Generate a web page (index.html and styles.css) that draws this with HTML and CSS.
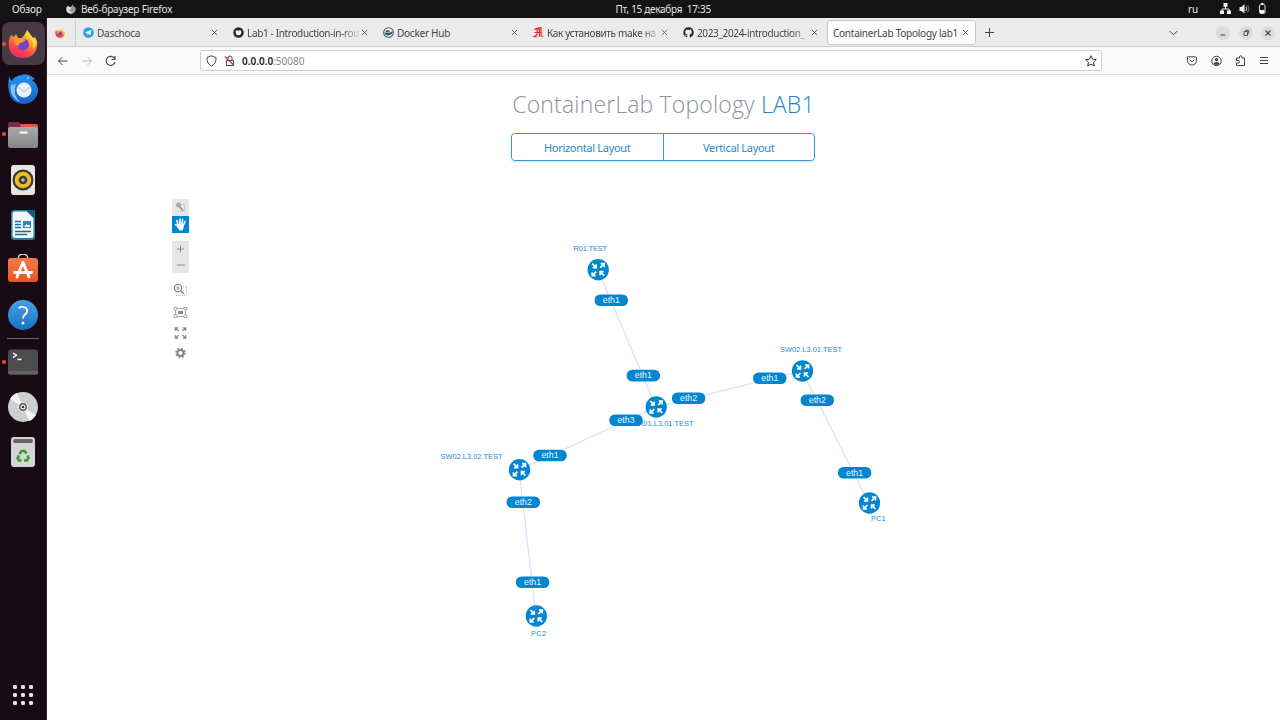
FILE: index.html
```html
<!DOCTYPE html>
<html lang="ru">
<head>
<meta charset="utf-8">
<title>ContainerLab Topology lab1</title>
<link rel="stylesheet" href="styles.css">
</head>
<body>
<svg class="defs" width="0" height="0">
  <defs>
    <linearGradient id="fox" x1=".8" y1="0" x2=".3" y2="1"><stop offset="0" stop-color="#ffe847"/><stop offset=".4" stop-color="#ff9a2e"/><stop offset=".7" stop-color="#ff4a45"/><stop offset="1" stop-color="#e8246f"/></linearGradient>
    <linearGradient id="bird" x1="0" y1="0" x2="0" y2="1"><stop offset="0" stop-color="#2a91ee"/><stop offset="1" stop-color="#1462c4"/></linearGradient>
    <linearGradient id="help" x1="0" y1="0" x2="0" y2="1"><stop offset="0" stop-color="#4ba0e4"/><stop offset="1" stop-color="#1573c6"/></linearGradient>
    <linearGradient id="bag" x1="0" y1="0" x2="0" y2="1"><stop offset="0" stop-color="#f07b4a"/><stop offset="1" stop-color="#e95420"/></linearGradient>
    <linearGradient id="grey" x1="0" y1="0" x2="0" y2="1"><stop offset="0" stop-color="#a9a9a9"/><stop offset="1" stop-color="#858585"/></linearGradient>
    <symbol id="firefox" viewBox="0 0 30 30">
      <path fill="url(#fox)" d="M3 6 6 8 8 5 10 9 14 9 17 5 19 1 22 6 25 9 27 8Q30 13 29 17 27 29 15 29 3 29 1 18 0 11 3 6Z"/>
      <circle cx="15" cy="15.500" r="6" fill="#7543c8"/>
      <path fill="#ff9a2e" d="M6 9 14 9 18 11 15 13 12 14 10 17 7 15Z"/>
      <path fill="#ffd83e" d="M19 1Q18 6 22 9 26 13 25 20 29 16 28 11L25 9 22 5Z"/>
    </symbol>
    <symbol id="close" viewBox="0 0 8 8"><path d="M1 1 7 7M7 1 1 7" stroke="#555" stroke-width="1" fill="none"/></symbol>
    <symbol id="router" viewBox="-11 -11 22 22">
      <circle r="10.700" fill="#0386d2"/>
      <g fill="none" stroke="#fff" stroke-width="1.700">
        <path d="M-6-6-2.200-2.200M-2-5.500V-2H-5.500M2-2 5.800-5.800M2.500-6H6V-2.500M-2 2-5.800 5.800M-2.500 6H-6V2.500M6 6 2.200 2.200M2 5.500V2H5.500"/>
      </g>
    </symbol>
  </defs>
</svg>

<header class="topbar">
  <span class="overview">Обзор</span>
  <svg class="topfox" viewBox="0 0 30 30"><path fill="#999" d="M3 6 6 8 8 5 10 9 14 9 17 5 19 1 22 6 25 9 27 8Q30 13 29 17 27 29 15 29 3 29 1 18 0 11 3 6Z"/><path fill="#ddd" d="M8 5 10 9 18 11 10 17 12 23 20 24 15 29Q3 28 1 18 0 10 8 5Z"/></svg>
  <span class="appname">Веб-браузер Firefox</span>
  <span class="clock">Пт, 15 декабря&nbsp; 17:35</span>
  <span class="lang">ru</span>
  <svg class="status" width="50" height="12" viewBox="0 0 50 12">
    <path d="M3.500 0H7.500V4H3.500ZM0 7.500H4V11H0ZM7 7.500H11V11H7Z" fill="#eee"/><path d="M5.500 3.500V6H2V8M5.500 6H9V8" stroke="#eee" stroke-width="1" fill="none"/>
    <path d="M19.500 4H21.500L24.500 1V10.500L21.500 8H19.500Z" fill="#eee"/><path d="M26 3.500Q27.300 5.700 26 8" stroke="#ddd" fill="none"/><path d="M27.700 2Q30 5.700 27.700 9.500" stroke="#777" fill="none"/>
    <rect x="39.500" y="1.500" width="5.500" height="9" rx="1.200" fill="none" stroke="#ddd"/><path d="M41 0H43.500V1.500H41ZM40 7H44.500V10H40Z" fill="#eee"/>
  </svg>
</header>

<div class="desktop">
  <nav class="dock">
    <div class="app active running"><svg viewBox="0 0 30 30"><use href="#firefox"/></svg></div>
    <div class="app"><svg viewBox="0 0 30 30"><path fill="url(#bird)" d="M2 1Q1 5 4 7 6 2 14 1 18-1 23 2L27 5 24 6Q31 11 30 18 27 30 15 30 3 29 1 18-1 9 2 1Z"/><path fill="#80c6f8" d="M3 11Q1 23 12 28 4 20 8 10Z"/><circle cx="16" cy="16" r="7.500" fill="#e9f2fc"/><path d="M10 13 16 18 22 13" fill="none" stroke="#9abce2"/><circle cx="20" cy="4" r=".8" fill="#fff"/></svg></div>
    <div class="app running"><svg viewBox="0 0 30 30"><path d="M0 5Q0 3 2 3H10L13 5H27Q30 5 30 8V14H0Z" fill="#7c2a51"/><path d="M12 5H28Q30 5 30 8V12H14Z" fill="#e25b35"/><rect y="8" width="30" height="21" rx="2.500" fill="url(#grey)"/><rect x="11.500" y="12.500" width="8" height="2" rx=".5" fill="#fff"/></svg></div>
    <div class="app"><svg viewBox="0 0 30 30"><rect x="3" y="0" width="24" height="30" rx="3" fill="#e9e4df"/><circle cx="15" cy="15" r="10.500" fill="#3b3b3b"/><circle cx="15" cy="15" r="6.300" fill="none" stroke="#f2bd20" stroke-width="4"/><circle cx="15" cy="15" r="1.800" fill="#bbb"/></svg></div>
    <div class="app"><svg viewBox="0 0 30 30"><path d="M6 0H20L27 7V27Q27 30 24 30H6Q3 30 3 27V3Q3 0 6 0Z" fill="#1b7cab"/><path d="M7 1.500H19L25.500 8V26Q25.500 28 23.500 28H7Q4.500 28 4.500 26V4Q4.500 1.500 7 1.500Z" fill="#f1f8fc"/><path d="M18 0H27V9Z" fill="#0d5e88"/><path d="M7 11.500H13M7 14.500H13M7 17.500H13M7 21.500H23M7 24.500H19" stroke="#1b6d98" stroke-width="1.600"/><rect x="15" y="11" width="8" height="7" fill="#2a8bbd"/><path d="M16 17 18.500 14 20 15.500 21 14.500 22.500 17Z" fill="#fff"/></svg></div>
    <div class="app store"><svg viewBox="0 0 30 30"><path d="M10 6Q10 0 15 0T20 6" fill="none" stroke="#f6d9a5" stroke-width="1.300"/><rect y="4" width="30" height="24" rx="3" fill="url(#bag)"/><path d="M9 23 15 8.500 21 23M6.500 18.500H23.500" fill="none" stroke="#fff" stroke-width="2.800" stroke-linecap="round" stroke-linejoin="round"/></svg></div>
    <div class="app"><svg viewBox="0 0 30 30"><circle cx="15" cy="15" r="15" fill="url(#help)"/><path d="M10.500 8Q15 5.500 18.500 8.500 20.500 12 16.500 15 15 16.500 15 18.500" fill="none" stroke="#fff" stroke-width="1.800"/><circle cx="15" cy="23" r="1.500" fill="#fff"/></svg></div>
    <hr class="divider">
    <div class="app running"><svg viewBox="0 0 30 30"><rect y="2.500" width="30" height="25" rx="3" fill="#4d4d4d"/><rect y="24" width="30" height="3.500" rx="1.700" fill="#626262"/><path d="M5 6 8.500 8.200 5 10.400M9.500 12.500H13.500" fill="none" stroke="#fff" stroke-width="1.300"/></svg></div>
    <div class="app"><svg viewBox="0 0 30 30"><circle cx="15" cy="15" r="15" fill="#cfcfcf"/><path d="M15 15 2 7Q5 2 9 1ZM15 15 28 23Q25 28 21 29Z" fill="#f5f5f5"/><circle cx="15" cy="15" r="4.800" fill="#f4f4f4"/><circle cx="15" cy="15" r="3.200" fill="none" stroke="#555" stroke-width="1.400"/><circle cx="15" cy="15" r="1.300" fill="#333"/></svg></div>
    <div class="app"><svg viewBox="0 0 30 30"><rect x="3" width="24" height="30" rx="3" fill="#d5d5d5"/><rect x="5" y="2" width="20" height="4" rx="2" fill="#666"/><g fill="none" stroke="#399b32" stroke-width="2.500"><path d="M11.500 17 13.500 14H16.500L18.500 16.500"/><path d="M19.500 18.500 20.500 21 19 23.500H16"/><path d="M13.500 23.500H11L9.500 21 11 18.500"/></g></svg></div>
    <div class="launcher"><i></i><i></i><i></i><i></i><i></i><i></i><i></i><i></i><i></i></div>
  </nav>

  <main class="browser">
    <div class="tabs">
      <div class="pinned"><svg viewBox="0 0 30 30"><use href="#firefox"/></svg></div>
      <div class="tab"><svg class="fav" viewBox="0 0 12 12"><circle cx="6" cy="6" r="5.800" fill="#2ba2dc"/><path d="M2 6 9.200 3 8.200 9 5.800 7.500 4.800 8.700V6.800Z" fill="#fff"/></svg><span class="label">Daschoca</span><svg class="x"><use href="#close"/></svg></div>
      <div class="tab"><svg class="fav" viewBox="0 0 12 12"><circle cx="6" cy="6" r="5.700" fill="#24282d"/><path d="M3 4 4.500 3.500 6 4.200 7.500 3.500 9 4Q9.500 9 6 9 2.500 9 3 4Z" fill="#f4f4f4"/></svg><span class="label cut">Lab1 - Introduction-in-rou</span><svg class="x"><use href="#close"/></svg></div>
      <div class="tab"><svg class="fav" viewBox="0 0 12 12"><circle cx="6" cy="6" r="5.300" fill="#fff" stroke="#395568" stroke-width="1.100"/><path d="M1.500 6H8L9 4.800 11 5.300Q9.500 9.500 5.500 9.200 2 9 1.500 6ZM3 3.500H7V5.500H3Z" fill="#395568"/></svg><span class="label">Docker Hub</span><svg class="x"><use href="#close"/></svg></div>
      <div class="tab"><svg class="fav" viewBox="0 0 12 12"><path d="M2 3.500Q2 1.200 4.500 1.500L7 2.500M4.500 2V7.500Q4 9.500 1.500 10.200L4 10.800M5.500 1.200 8.800.8V9.500L10.800 10.500M7 2V10.500M1.500 6H8.500" fill="none" stroke="#e6292f" stroke-width="1.300"/></svg><span class="label cut">Как установить make на</span><svg class="x"><use href="#close"/></svg></div>
      <div class="tab"><svg class="fav" viewBox="0 0 16 16"><path fill="#24292e" d="M8 .5a7.500 7.500 0 0 0-2.400 14.600c.4.100.5-.2.500-.4v-1.500c-2.100.5-2.500-.9-2.500-.9-.3-.9-.8-1.100-.8-1.100-.7-.5 0-.5 0-.5.800.1 1.200.8 1.200.8.700 1.200 1.800.9 2.200.7 0-.5.300-.9.500-1.100-1.700-.2-3.400-.8-3.400-3.700 0-.8.300-1.500.8-2-.1-.2-.4-1 .1-2 0 0 .6-.2 2 .8a7 7 0 0 1 3.700 0c1.400-1 2-.8 2-.8.5 1 .2 1.800.1 2 .5.500.8 1.200.8 2 0 2.900-1.800 3.500-3.400 3.700.3.200.5.700.5 1.400v2.200c0 .2.100.5.500.4A7.500 7.500 0 0 0 8 .5Z"/></svg><span class="label cut">2023_2024-introduction_</span><svg class="x"><use href="#close"/></svg></div>
      <div class="tab current"><span class="label">ContainerLab Topology lab1</span><svg class="x"><use href="#close"/></svg></div>
      <svg class="plus" viewBox="0 0 9 9"><path d="M4.500 0V9M0 4.500H9" stroke="#444"/></svg>
      <svg class="chevron" viewBox="0 0 9 6"><path d="M.5.800 4.500 4.800 8.500.8" fill="none" stroke="#444"/></svg>
      <div class="winbtns">
        <span><svg viewBox="0 0 14 14"><path d="M4.500 9H9.500" stroke="#444"/></svg></span>
        <span><svg viewBox="0 0 14 14"><path d="M5 5.500H8.500V9.500H5ZM6 4.300H9.700V8" fill="none" stroke="#444" stroke-width=".9"/></svg></span>
        <span><svg viewBox="0 0 14 14"><path d="M4.500 4.500 9.500 9.500M9.500 4.500 4.500 9.500" stroke="#444" stroke-width="1.100"/></svg></span>
      </div>
    </div>

    <div class="toolbar">
      <svg class="nav" width="60" height="12" viewBox="0 0 60 12" fill="none">
        <path d="M10.500 6H1.500M5.500 2 1.500 6 5.500 10" stroke="#444"/>
        <path d="M25.500 6H34.500M30.500 2 34.500 6 30.500 10" stroke="#bbb"/>
        <path d="M57.500 3.500A4.500 4.500 0 1 0 58 7M58 1V4.500H54.500" stroke="#444" stroke-width="1.100"/>
      </svg>
      <div class="urlbar">
        <svg width="30" height="12" viewBox="0 0 30 12" fill="none" stroke="#444">
          <path d="M5.500.800 10 2.500Q10.500 8.500 5.500 11 .5 8.500 1 2.500Z"/>
          <path d="M20.500 5.500H27.500V10.500H20.500ZM22 5.500V3Q22 1 24 1T26 3V5.500"/><path d="M19 1.500 28 10.500" stroke="#e22850" stroke-width="1.200"/>
        </svg>
        <span class="url"><b>0.0.0.0</b>:50080</span>
        <svg class="star" width="12" height="12" viewBox="0 0 12 12"><path d="M6 .8 7.600 4.200 11.300 4.600 8.500 7.200 9.300 11 6 9.100 2.700 11 3.500 7.200.7 4.600 4.400 4.200Z" fill="none" stroke="#333" stroke-linejoin="round"/></svg>
      </div>
      <svg class="tools" width="84" height="12" viewBox="0 0 84 12" fill="none" stroke="#444">
        <path d="M1.500 1.800H9.500Q10.500 1.800 10.500 3V5.500Q10 10 6 10T1.500 5.500V3Q1 1.800 1.500 1.800ZM3.500 4.500 6 7 8.500 4.500"/>
        <circle cx="30.500" cy="6" r="4.700"/><circle cx="30.500" cy="4.600" r="1.700" fill="#444" stroke="none"/><path d="M27.500 9Q27.500 7 30.500 7T33.500 9Q30.500 11 27.500 9Z" fill="#444" stroke="none"/>
        <path d="M50.500 10.500V8H52Q53.500 8 53.500 6.700T52 5.500H50.500V3H53.500V2Q53.500.7 54.700.7T56 2V3H58.500V10.500Z"/>
        <path d="M74 2.500H82M74 5.500H82M74 8.500H82"/>
      </svg>
    </div>

    <section class="page">
      <h1>ContainerLab Topology <span>LAB1</span></h1>
      <div class="buttons"><button>Horizontal Layout</button><button>Vertical Layout</button></div>
      <div class="topology">
        <div class="sidebar">
          <div class="group">
            <span><svg viewBox="0 0 17 17" fill="none"><circle cx="6.500" cy="6" r="2" fill="#aaa" stroke="#999"/><path d="M8 8 11 12" stroke="#888" stroke-width="1.300"/><path d="M9 5.500H12.500V12.500H6" stroke="#bbb" stroke-dasharray="1 1"/></svg></span>
            <span class="on"><svg viewBox="0 0 17 17"><g stroke="#fff" stroke-width="1.600" stroke-linecap="round"><path d="M6 9 5 4.500M8 8V3M10 8 10.600 3.500M11.500 9 13 5.500M6.500 11 3.500 8.500"/></g><path d="M5.500 8H12L11.500 12 10.500 14.500H7.500L5 11Z" fill="#fff"/></svg></span>
          </div>
          <div class="group zoom">
            <span><svg viewBox="0 0 17 17"><path d="M8.500 5V12M5 8.500H12" stroke="#888"/></svg></span>
            <span><svg viewBox="0 0 17 17"><path d="M4.500 8.500H13" stroke="#888"/></svg></span>
          </div>
          <svg class="zoomsel" viewBox="0 0 17 17" fill="none"><circle cx="6" cy="7" r="3.700" stroke="#888" stroke-width="1.200"/><path d="M9 10 12 13" stroke="#888" stroke-width="1.500"/><path d="M4 7H8M6 5V9" stroke="#999"/><path d="M11 5.500H14.500V14.500H4V11" stroke="#bbb" stroke-dasharray="1 1"/></svg>
          <svg class="fit" viewBox="0 0 17 17"><path d="M3.500 4.500H13.500V12.500H3.500Z" fill="none" stroke="#aaa"/><path d="M2 3.500H5V6H2ZM12 3.500H15V6H12ZM2 11H5V13.500H2ZM12 11H15V13.500H12Z" fill="#fff" stroke="#999" stroke-width=".8"/><path d="M6 7H11V10H6Z" fill="#888"/></svg>
          <svg class="full" viewBox="0 0 17 17" fill="none" stroke="#888" stroke-width="1.400"><path d="M6.500 6.500 3.500 3.500M3 6V3H6M10.500 6.500 13.500 3.500M11 3H14V6M6.500 10.500 3.500 13.500M3 11V14H6M10.500 10.500 13.500 13.500M14 11V14H11"/></svg>
          <svg class="gear" viewBox="0 0 17 17" fill="none" stroke="#888"><circle cx="8.500" cy="8.500" r="3.200" stroke-width="2.200"/><circle cx="8.500" cy="8.500" r="4.800" stroke-width="1.800" stroke-dasharray="1.885 1.885"/></svg>
        </div>
        <svg class="canvas" width="1091" height="521" viewBox="189 199 1091 521">
          <g class="links"><path d="M598 270 656 407 802 371 869 503M656 407 519 470 536 616"/></g>
          <g class="names">
            <text x="573.500" y="250.800" textLength="33.500">R01.TEST</text>
            <text x="780" y="352.300" textLength="62">SW02.L3.01.TEST</text>
            <text x="638" y="425.500" textLength="55.500">R01.L3.01.TEST</text>
            <text x="440.500" y="459.300" textLength="62">SW02.L3.02.TEST</text>
            <text x="871" y="520.800" textLength="14.500">PC1</text>
            <text x="531" y="635.500" textLength="15">PC2</text>
          </g>
          <g class="nodes">
            <use href="#router" x="587.200" y="258.700" width="22" height="22"/>
            <use href="#router" x="645.200" y="396" width="22" height="22"/>
            <use href="#router" x="791.500" y="360" width="22" height="22"/>
            <use href="#router" x="858.500" y="492" width="22" height="22"/>
            <use href="#router" x="508.500" y="458.700" width="22" height="22"/>
            <use href="#router" x="525.300" y="605" width="22" height="22"/>
          </g>
          <g class="ports">
            <g transform="translate(611.300 300.200)"><rect/><text>eth1</text></g>
            <g transform="translate(643.300 375.600)"><rect/><text>eth1</text></g>
            <g transform="translate(688.600 398.200)"><rect/><text>eth2</text></g>
            <g transform="translate(769.800 378.200)"><rect/><text>eth1</text></g>
            <g transform="translate(817.300 400.200)"><rect/><text>eth2</text></g>
            <g transform="translate(854.600 472.800)"><rect/><text>eth1</text></g>
            <g transform="translate(626 420.200)"><rect/><text>eth3</text></g>
            <g transform="translate(550 455.500)"><rect/><text>eth1</text></g>
            <g transform="translate(523.300 502.200)"><rect/><text>eth2</text></g>
            <g transform="translate(532.600 582.200)"><rect/><text>eth1</text></g>
          </g>
        </svg>
      </div>
    </section>
  </main>
</div>
</body>
</html>
```
FILE: styles.css
```css
* { box-sizing: border-box; }
body { margin: 0; width: 1280px; height: 720px; overflow: hidden; display: flex; flex-direction: column; font-family: "Noto Sans", "Open Sans", sans-serif; font-size: 10px; background: #fff; }
svg { display: block; flex: none; }
.defs { position: absolute; }

.topbar { height: 18px; flex: none; background: #131313; color: #e6e6e6; display: flex; align-items: center; padding: 0 10px 0 12px; white-space: nowrap; letter-spacing: -.18px; }
.overview { width: 54px; }
.topfox { width: 10px; height: 10px; margin-right: 5px; }
.appname { width: 535px; }
.clock { width: 573px; letter-spacing: -.3px; }
.lang { width: 32px; }
.status { margin-top: -1px; }

.desktop { flex: 1; display: flex; min-height: 0; }
.dock { width: 47px; background: #190b14; border-right: 1px solid #2c222a; padding-top: 3px; display: flex; flex-direction: column; align-items: center; }
.app { width: 43px; height: 45.300px; flex: none; display: flex; align-items: center; justify-content: center; position: relative; }
.app svg { width: 30px; height: 30px; }
.app.active { background: #463b44; border-radius: 8px; height: 42.500px; margin: 1.400px 0; }
.app.store { padding-bottom: 3px; }
.app.running::before { content: ""; position: absolute; left: 0; top: 50%; width: 4px; height: 4px; margin-top: -2px; border-radius: 50%; background: #e95420; }
.divider { width: 32px; height: 1px; border: 0; margin: 0; background: #706870; flex: none; }
.launcher { margin-top: auto; margin-bottom: 15px; display: grid; grid-template-columns: repeat(3, 4px); gap: 4px; }
.launcher i { width: 4px; height: 4px; border-radius: 1.300px; background: #e6e3e5; }

.browser { flex: 1; min-width: 0; display: flex; flex-direction: column; background: #fff; }
.tabs { height: 29px; flex: none; background: #ebebeb; border-bottom: 1px solid #ccc; display: flex; align-items: center; padding-top: 1px; color: #444; }
.pinned { width: 29px; height: 28px; border-right: 1px solid #d0d0d0; padding: 9px 0 0 8px; }
.pinned svg { width: 10px; height: 10px; }
.tab { width: 150px; height: 25px; padding: 0 8px 0 7px; display: flex; align-items: center; white-space: nowrap; flex: none; }
.tab .fav { width: 11px; height: 11px; margin-right: 3px; flex: none; }
.tab .label { flex: 1; line-height: 16px; letter-spacing: -.25px; }
.tab .cut { letter-spacing: -.35px; -webkit-mask-image: linear-gradient(90deg, #000 84%, rgba(0, 0, 0, .15)); mask-image: linear-gradient(90deg, #000 84%, rgba(0, 0, 0, .15)); }
.tab .x { width: 7px; height: 7px; margin-left: 2px; }
.tab.current { width: 149px; margin-left: 1px; padding: 0 6px 0 5px; background: #fdfdfd; border: 1px solid #c8c8c8; border-radius: 3px; }
.plus { width: 9px; height: 9px; margin-left: 9px; }
.chevron { width: 9px; height: 6px; margin-left: 175px; }
.winbtns { display: flex; gap: 8.500px; margin-left: 38px; }
.winbtns span { width: 14px; height: 14px; border-radius: 50%; background: #dcdcdc; }

.toolbar { height: 28px; flex: none; background: #fafafa; border-bottom: 1px solid #ddd; display: flex; align-items: center; padding-left: 10px; }
.urlbar { margin-left: 83px; width: 902px; height: 21px; background: #fff; border: 1px solid #cfcfcf; border-radius: 3px; display: flex; align-items: center; padding: 0 4px 0 5px; }
.url { margin-left: 6px; flex: 1; color: #888; font-size: 10px; }
.url b { color: #222; font-weight: 600; }
.tools { margin-left: 84px; }

.page { flex: 1; display: flex; flex-direction: column; }
h1 { margin: 14px 0 0; height: 32px; line-height: 31px; text-align: center; font-family: "Open Sans", sans-serif; font-size: 23px; letter-spacing: .16px; font-weight: 300; color: #8d939d; white-space: nowrap; }
h1 span { color: #1486d5; }
.buttons { width: 304px; height: 28px; margin: 12px 0 0 464px; display: flex; border: 1px solid #3398d4; border-radius: 4px; box-shadow: 0 1px 2px #ddd; flex: none; }
.buttons button { flex: 1; border: 0; background: #fff; color: #2389cb; font: 11px "Noto Sans", sans-serif; letter-spacing: -.3px; padding: 0; border-radius: 4px; white-space: nowrap; }
.buttons button + button { border-left: 1px solid #3398d4; border-radius: 0 4px 4px 0; }
.topology { display: flex; margin-top: 38px; }
.sidebar { width: 17px; margin-left: 125px; flex: none; }
.sidebar svg { width: 17px; height: 17px; }
.group { background: #e6e6e6; margin-bottom: 8px; }
.group span { display: block; height: 17px; }
.group.zoom span { height: 16px; }
.group.zoom svg { height: 16px; }
.group .on { background: #0386d2; }
.sidebar .zoomsel { margin-top: 6px; }
.sidebar .fit { margin-top: 6px; }
.sidebar .full { margin-top: 4px; height: 16px; }
.sidebar .gear { margin-top: 4px; height: 16px; }
.canvas { display: block; }
.links path { fill: none; stroke: #d6e3f5; stroke-width: 1.300; }
.names text { font: 7.400px "Liberation Sans", sans-serif; fill: #2389cb; }
.ports rect { x: -16.700px; y: -5.800px; width: 33.400px; height: 11.600px; rx: 5.500px; fill: #0386d2; }
.ports text { font: 8.800px "Liberation Sans", sans-serif; fill: #e9f5fc; text-anchor: middle; transform: translateY(2.800px); }
```
